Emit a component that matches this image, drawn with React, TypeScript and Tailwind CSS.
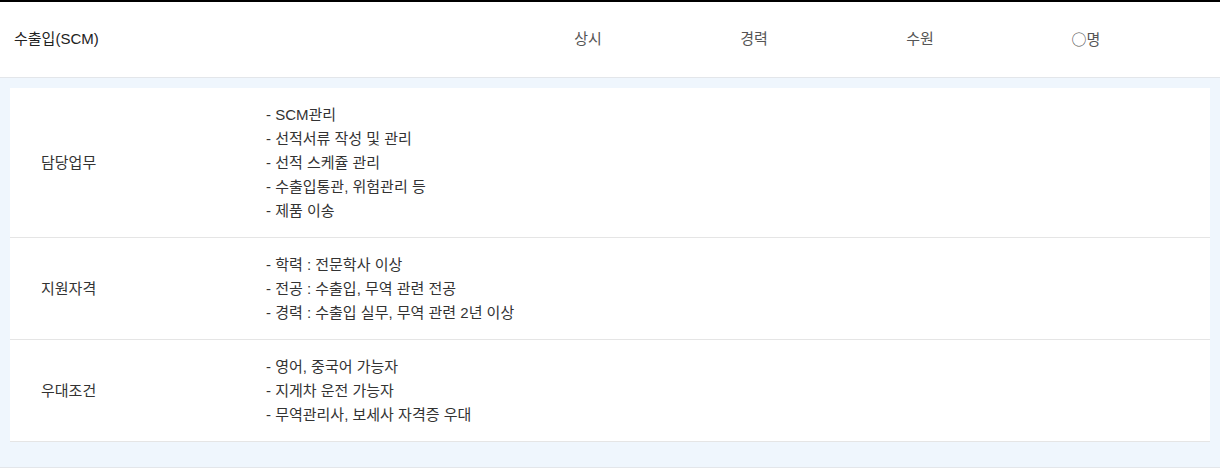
const font = { fontFamily: '"Liberation Sans", "Noto Sans CJK KR", sans-serif' };
const cjk = { fontFamily: '"Noto Sans CJK KR", sans-serif' };

const rows = [
  {
    label: "담당업무",
    items: ["SCM관리", "선적서류 작성 및 관리", "선적 스케쥴 관리", "수출입통관, 위험관리 등", "제품 이송"],
  },
  {
    label: "지원자격",
    items: ["학력 : 전문학사 이상", "전공 : 수출입, 무역 관련 전공", "경력 : 수출입 실무, 무역 관련 2년 이상"],
  },
  {
    label: "우대조건",
    items: ["영어, 중국어 가능자", "지게차 운전 가능자", "무역관리사, 보세사 자격증 우대"],
  },
];

export default function App() {
  return (
    <div className="w-[1220px] h-[469px] bg-white border-t-2 border-black overflow-hidden" style={font}>
      {/* summary header */}
      <div className="h-[76px] flex items-center border-b border-[#e3e6ea] bg-white">
        <div className="w-[505px] pl-[14px] text-[15px] text-[#222]">수출입(SCM)</div>
        <div className="w-[166px] text-center text-[15px] text-[#555]">상시</div>
        <div className="w-[166px] text-center text-[15px] text-[#555]">경력</div>
        <div className="w-[166px] text-center text-[15px] text-[#555]">수원</div>
        <div className="w-[166px] text-center text-[15px] text-[#555]">
          <span style={cjk}>○</span>명
        </div>
      </div>

      {/* detail panel */}
      <div className="bg-[#eff6fd] px-[10px] pt-[10px] pb-[25px] border-b border-[#e3e6ea]">
        <div className="bg-white">
          {rows.map((r) => (
            <div key={r.label} className="flex items-center border-b border-[#e5e5e5] pt-[15px] pb-[14px]">
              <div className="w-[256px] pl-[31px] text-[15px] text-[#333]">{r.label}</div>
              <ul className="flex flex-col">
                {r.items.map((it) => (
                  <li key={it} className="text-[15px] leading-[24px] text-[#333]">
                    - {it}
                  </li>
                ))}
              </ul>
            </div>
          ))}
        </div>
      </div>
    </div>
  );
}
